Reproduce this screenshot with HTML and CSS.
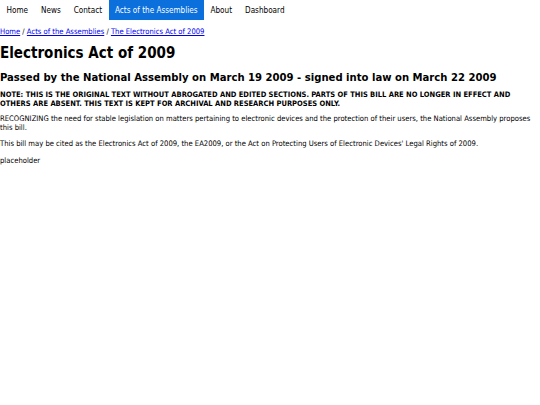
FILE: index.html
```html
<!DOCTYPE html>
<html>
<head>
<meta charset="utf-8">
<link rel="stylesheet" href="styles.css">
</head>
<body>
<nav class="nav">
  <a class="nav-item" href="#">Home</a>
  <a class="nav-item" href="#">News</a>
  <a class="nav-item" href="#">Contact</a>
  <a class="nav-item active" href="#">Acts of the Assemblies</a>
  <a class="nav-item" href="#">About</a>
  <a class="nav-item" href="#">Dashboard</a>
</nav>
<div class="crumbs"><a href="#">Home</a> / <a href="#">Acts of the Assemblies</a> / <a href="#">The Electronics Act of 2009</a></div>
<h1 class="title">Electronics Act of 2009</h1>
<h2 class="subtitle">Passed by the National Assembly on March 19 2009 - signed into law on March 22 2009</h2>
<p class="note">NOTE: THIS IS THE ORIGINAL TEXT WITHOUT ABROGATED AND EDITED SECTIONS. PARTS OF THIS BILL ARE NO LONGER IN EFFECT AND OTHERS ARE ABSENT. THIS TEXT IS KEPT FOR ARCHIVAL AND RESEARCH PURPOSES ONLY.</p>
<p class="text">RECOGNIZING the need for stable legislation on matters pertaining to electronic devices and the protection of their users, the National Assembly proposes this bill.</p>
<p class="text">This bill may be cited as the Electronics Act of 2009, the EA2009, or the Act on Protecting Users of Electronic Devices' Legal Rights of 2009.</p>
<p class="text">placeholder</p>
</body>
</html>
```
FILE: styles.css
```css
body {
  margin: 0;
  font-family: "DejaVu Sans Condensed", "DejaVu Sans", sans-serif;
  font-stretch: condensed;
  font-size: 7.6px;
  color: #000;
  background: #fff;
}
.nav {
  display: flex;
}
.nav-item {
  display: block;
  padding: 0 6.5px;
  line-height: 20px;
  font-size: 8.1px;
  color: #000;
  text-decoration: none;
}
.nav-item.active {
  background: #0b6fdc;
  color: #fff;
}
.crumbs {
  margin-top: 7px;
  line-height: 9px;
}
.crumbs a {
  color: #0000ee;
}
.title {
  font-size: 15px;
  line-height: 18px;
  margin: 8px 0 9px;
}
.subtitle {
  font-size: 11.2px;
  line-height: 14px;
  margin: 0 0 6px;
}
.note {
  font-size: 7.5px;
  font-weight: bold;
  line-height: 8.5px;
  margin: 0 0 7px;
}
.text {
  line-height: 8.5px;
  margin: 0 0 8px;
}
```
